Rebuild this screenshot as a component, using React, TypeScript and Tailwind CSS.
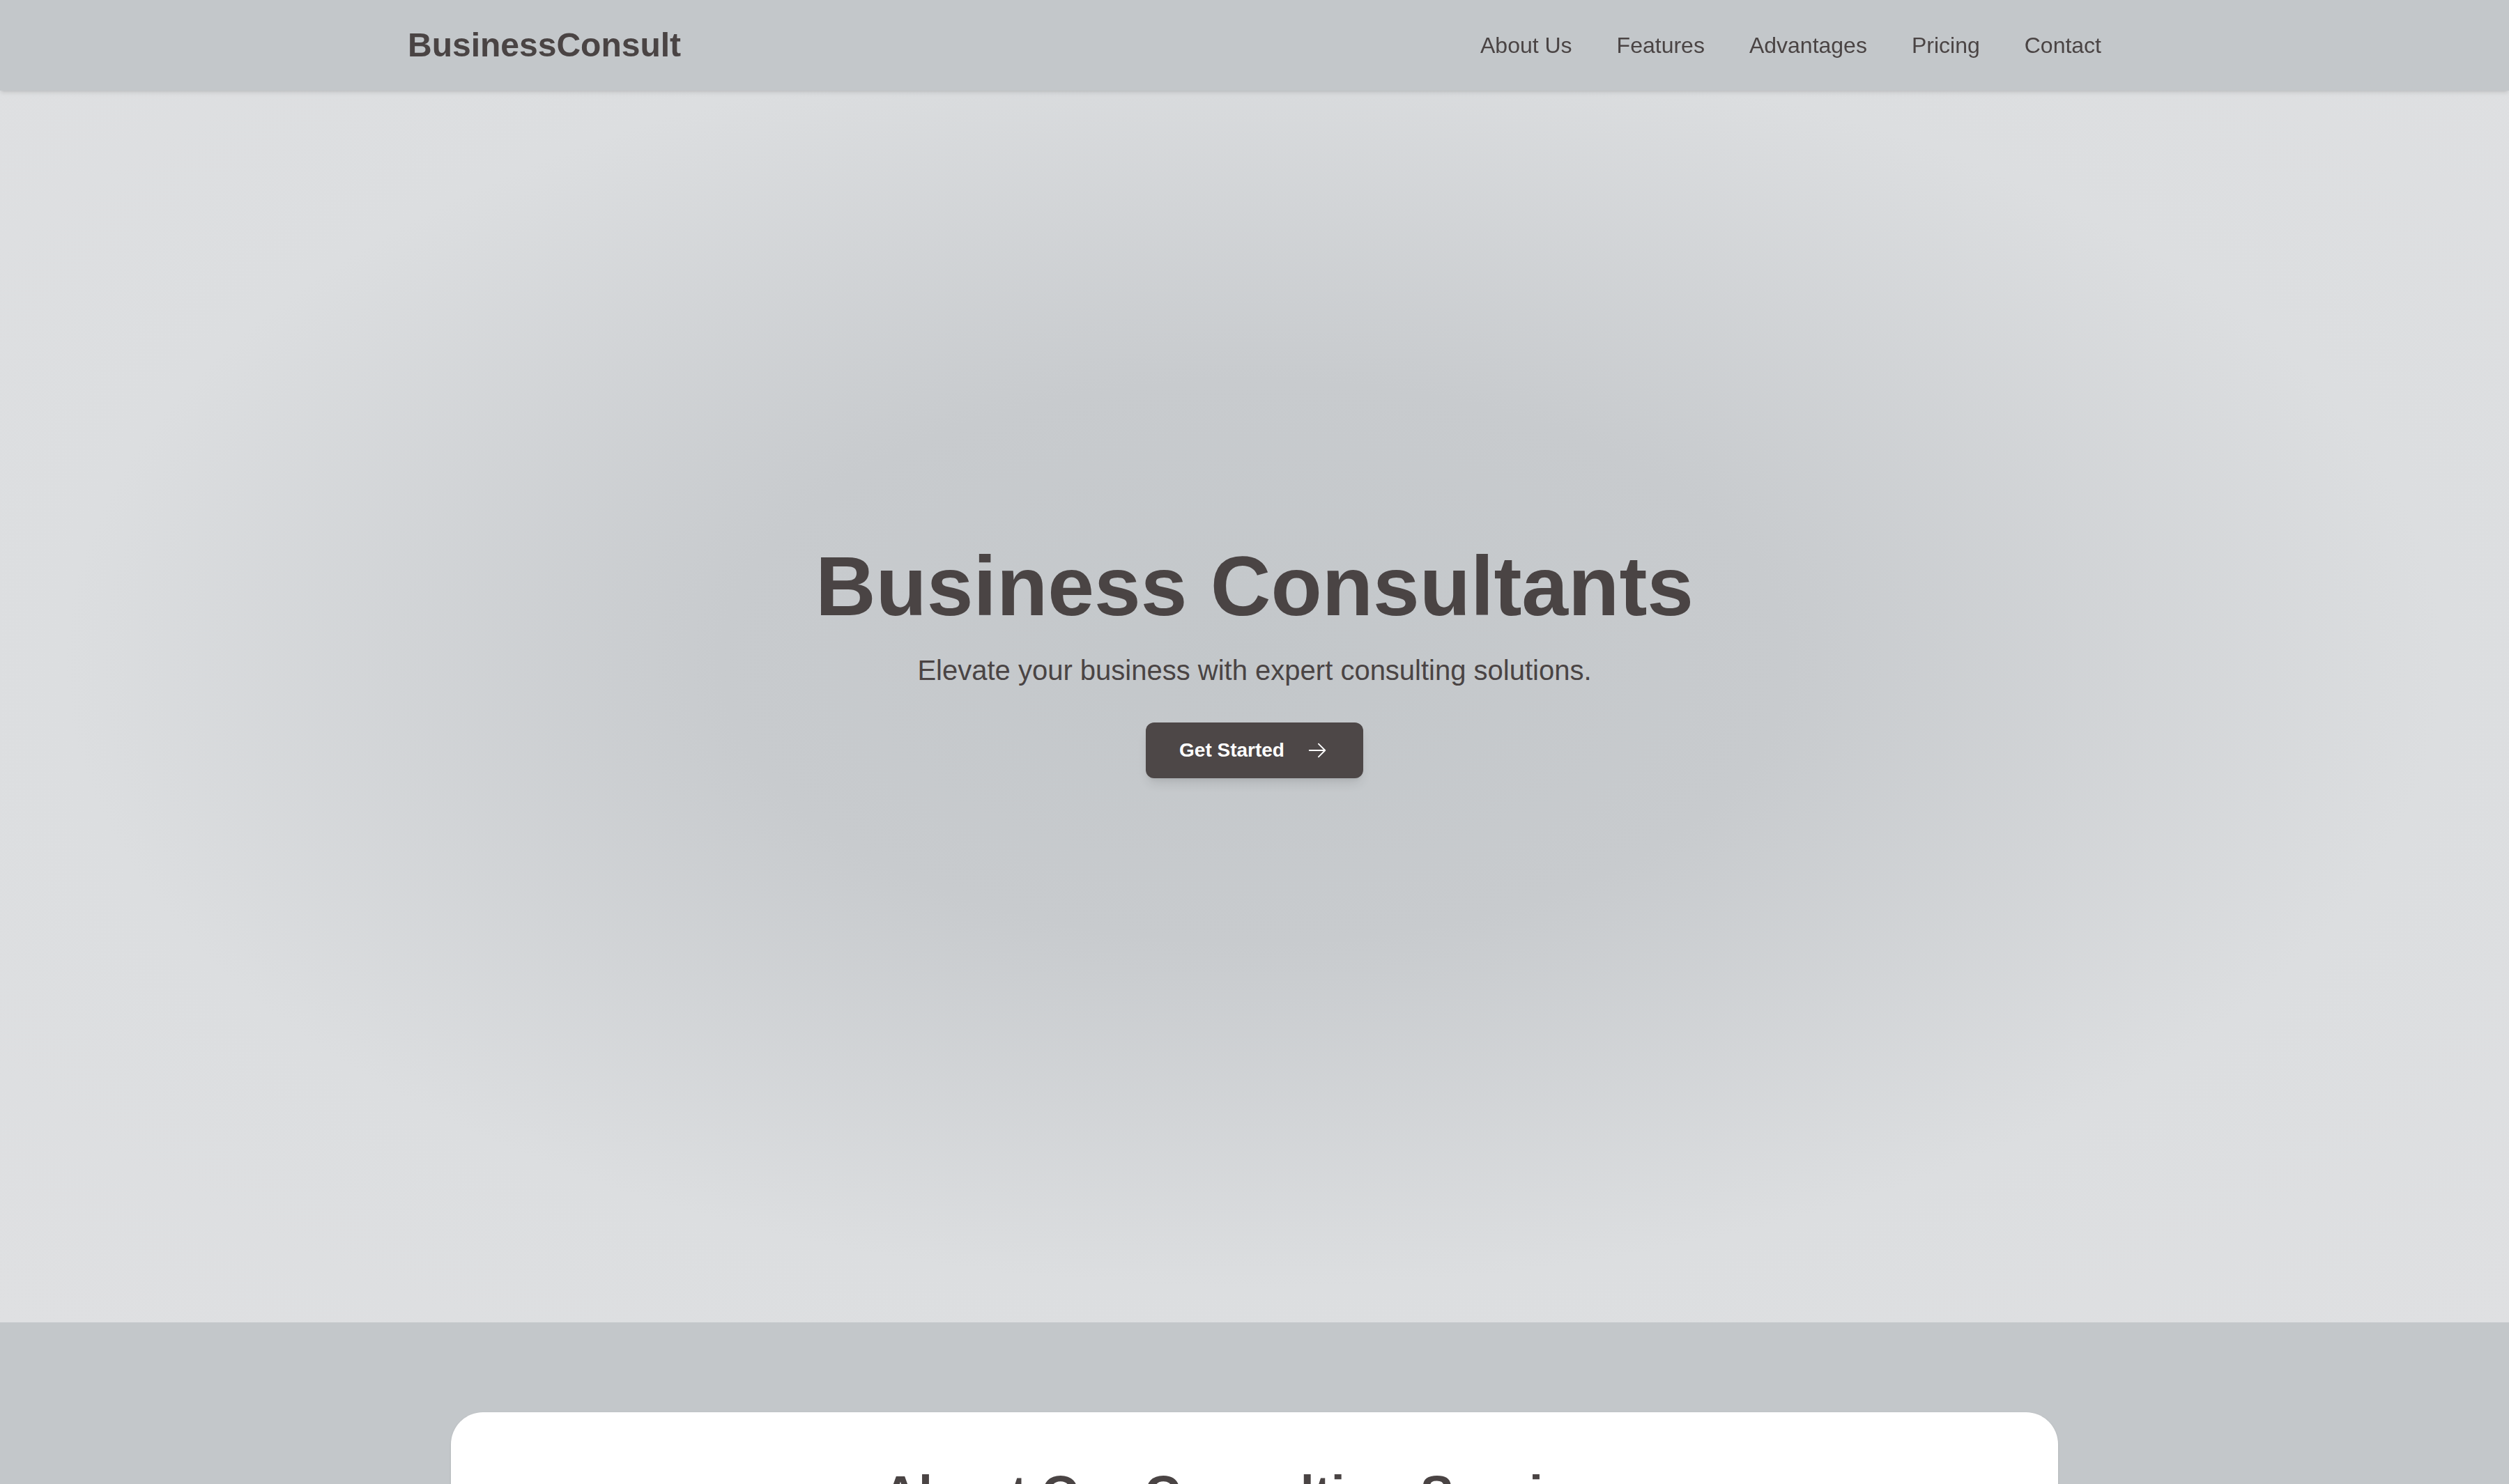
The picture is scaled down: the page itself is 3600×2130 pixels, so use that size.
import React from 'react';

const navLinks = ['About Us', 'Features', 'Advantages', 'Pricing', 'Contact'];

const ArrowIcon: React.FC = () => (
  <svg
    xmlns="http://www.w3.org/2000/svg"
    viewBox="0 0 24 24"
    fill="none"
    stroke="currentColor"
    strokeWidth="1.5"
    strokeLinecap="round"
    strokeLinejoin="round"
    className="w-[30px] h-[30px]"
  >
    <path d="M13.5 4.5 21 12m0 0-7.5 7.5M21 12H3" />
  </svg>
);

const Header: React.FC = () => (
  <header className="fixed top-0 left-0 right-0 z-10 bg-[#c3c7ca] shadow-md">
    <div className="mx-auto w-[2430px] h-[130px] flex items-center justify-between">
      <span className="text-[48px] font-bold text-[#4a4444] leading-[1.15]">BusinessConsult</span>
      <nav className="flex items-center gap-[64px]">
        {navLinks.map(link => (
          <a key={link} href="#" className="text-[32px] text-[#4a4444] leading-[1.15]">
            {link}
          </a>
        ))}
      </nav>
    </div>
  </header>
);

const Hero: React.FC = () => (
  <section className="h-[1898px] flex flex-col items-center justify-center bg-[radial-gradient(ellipse_at_center,#c3c7ca_0%,#c8cbce_30%,#dcdee0_67%,#dfe0e2_100%)]">
    <h1 className="text-[120px] leading-none font-bold text-[#4a4444]">Business Consultants</h1>
    <p className="mt-[31px] text-[40px] leading-[1.5] text-[#4a4444]">
      Elevate your business with expert consulting solutions.
    </p>
    <button className="mt-[45px] h-[80px] pl-[48px] pr-[51px] flex items-center gap-[32px] rounded-[12px] bg-[#4d4747] text-white text-[28px] font-bold shadow-lg">
      Get Started
      <ArrowIcon />
    </button>
  </section>
);

const About: React.FC = () => (
  <section className="bg-[#c3c7ca] pt-[129px] pb-[128px]">
    <div className="mx-auto w-[2306px] rounded-[46px] bg-white px-[72px] pt-[74px] pb-[72px] shadow-sm">
      <h2 className="text-center text-[72px] leading-[1.2] font-bold text-[#4a4444]">About Our Consulting Services</h2>
      <p className="mt-[40px] text-center text-[36px] leading-[1.6] text-[#5a5454]">
        We partner with organizations of every size to sharpen strategy, streamline operations and unlock sustainable growth.
      </p>
    </div>
  </section>
);

const App: React.FC = () => (
  <div className="min-h-screen font-['Liberation_Sans',Arial,sans-serif] bg-[#c3c7ca]">
    <Header />
    <Hero />
    <About />
  </div>
);

export default App;
